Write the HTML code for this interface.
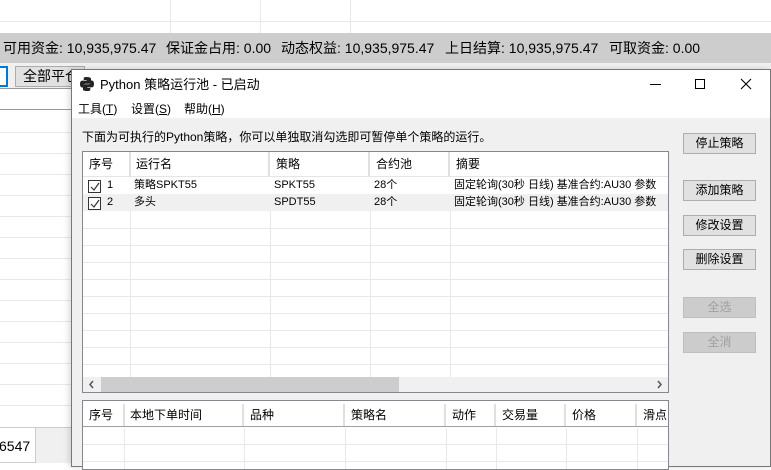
<!DOCTYPE html>
<html><head><meta charset="utf-8"><style>
*{margin:0;padding:0;box-sizing:border-box}
body{width:771px;height:467px;overflow:hidden;background:#fff;position:relative;font-family:"Liberation Sans","Noto Sans CJK SC",sans-serif;font-size:12px;color:#000}
.a{position:absolute}
.hl{position:absolute;height:1px;background:#e8e8e8}
.vl{position:absolute;width:1px;background:#e8e8e8}
.btn{position:absolute;background:#e1e1e1;border:1px solid #adadad;text-align:center;font-size:12px;line-height:18px}
.dis{color:#a0a0a0;background:#cccccc;border-color:#bfbfbf}
.hd{position:absolute;top:0;height:24px;line-height:24px;padding-left:6px;border-right:2px solid #e0e0e0;font-size:12px}
.cell{position:absolute;font-size:11px;line-height:17px}
.cb{position:absolute;width:13px;height:13px;border:1px solid #333;background:#fff}
.st{position:absolute;top:33px;font-size:14px;line-height:30px;white-space:nowrap}
</style></head><body>
<div class="hl" style="left:0;top:21px;width:771px"></div>
<div class="vl" style="left:170px;top:0;height:33px"></div>
<div class="vl" style="left:260px;top:0;height:33px"></div>
<div class="vl" style="left:350px;top:0;height:33px"></div>
<div class="a" style="left:0;top:33px;width:771px;height:30px;background:#cdcdcd"></div>
<div class="st" style="left:3px">可用资金: 10,935,975.47</div>
<div class="st" style="left:166px">保证金占用: 0.00</div>
<div class="st" style="left:281px">动态权益: 10,935,975.47</div>
<div class="st" style="left:445px">上日结算: 10,935,975.47</div>
<div class="st" style="left:609px">可取资金: 0.00</div>
<div class="a" style="left:0;top:63px;width:771px;height:26px;background:#f0f0f0"></div>
<div class="a" style="left:-4px;top:66px;width:12px;height:21px;border:2px solid #0078d7;background:#fff"></div>
<div class="a" style="left:15px;top:66px;width:70px;height:21px;border:1px solid #adadad;background:#e1e1e1;font-size:14px;line-height:19px;padding-left:7px">全部平仓</div>
<div class="a" style="left:0;top:88px;width:71px;height:1px;background:#999"></div>
<div class="a" style="left:0;top:89px;width:71px;height:21px;background:#fff;border-bottom:1px solid #999"></div>
<div class="hl" style="left:0;top:132px;width:71px"></div><div class="hl" style="left:0;top:153px;width:71px"></div>
<div class="hl" style="left:0;top:174px;width:71px"></div><div class="hl" style="left:0;top:195px;width:71px"></div>
<div class="hl" style="left:0;top:216px;width:71px"></div><div class="hl" style="left:0;top:237px;width:71px"></div>
<div class="hl" style="left:0;top:258px;width:71px"></div><div class="hl" style="left:0;top:279px;width:71px"></div>
<div class="hl" style="left:0;top:300px;width:71px"></div><div class="hl" style="left:0;top:321px;width:71px"></div>
<div class="hl" style="left:0;top:342px;width:71px"></div><div class="hl" style="left:0;top:363px;width:71px"></div>
<div class="hl" style="left:0;top:384px;width:71px"></div><div class="hl" style="left:0;top:405px;width:71px"></div>
<div class="a" style="left:0;top:427px;width:71px;height:36px;background:#f0f0f0;border-top:1px solid #ccc"></div>
<div class="a" style="left:-2px;top:427px;width:38px;height:36px;background:#fff;border:1px solid #ccc;font-size:14px;line-height:36px">6547</div>
<div class="a" style="left:71px;top:69px;width:700px;height:398px;background:#f0f0f0;border:1px solid #777;box-shadow:-2px 0 6px rgba(0,0,0,.15)"></div>
<div class="a" style="left:72px;top:70px;width:698px;height:48px;background:#fff"></div>
<svg class="a" style="left:79px;top:76px" width="16" height="16" viewBox="0 0 16 16"><path d="M7.5 1C4.5 1 4.7 2.3 4.7 2.3V4h3v.6H3.5S1 4.3 1 8c0 3.6 2.1 3.5 2.1 3.5h1.3V9.8s-.1-2.1 2.1-2.1h3.5s2 0 2-2V2.8S12.3 1 7.5 1z" fill="#222"/><path d="M8.5 15c3 0 2.8-1.3 2.8-1.3V12h-3v-.6h4.2S15 11.7 15 8c0-3.6-2.1-3.5-2.1-3.5h-1.3v1.7s.1 2.1-2.1 2.1H6s-2 0-2 2v3.3S3.7 15 8.5 15z" fill="#222"/></svg>
<div class="a" style="left:100px;top:76px;font-size:13px;line-height:17px">Python 策略运行池 - 已启动</div>
<div class="a" style="left:650px;top:84px;width:11px;height:1px;background:#000"></div>
<div class="a" style="left:695px;top:79px;width:10px;height:10px;border:1px solid #000"></div>
<svg class="a" style="left:740px;top:78px" width="12" height="12"><path d="M1 1L11 11M11 1L1 11" stroke="#000" stroke-width="1.1"/></svg>
<div class="a" style="left:78px;top:101px;font-size:12px;line-height:16px">工具(<u>T</u>)</div>
<div class="a" style="left:131px;top:101px;font-size:12px;line-height:16px">设置(<u>S</u>)</div>
<div class="a" style="left:184px;top:101px;font-size:12px;line-height:16px">帮助(<u>H</u>)</div>
<div class="a" style="left:82px;top:129px;font-size:12px;line-height:16px">下面为可执行的Python策略，你可以单独取消勾选即可暂停单个策略的运行。</div>
<div class="a" style="left:82px;top:151px;width:587px;height:242px;background:#fff;border:1px solid #828790;overflow:hidden">
 <div class="a" style="left:0;top:0;width:587px;height:25px;border-bottom:1px solid #e5e5e5">
  <div class="hd" style="left:0;width:48px">序号</div>
  <div class="hd" style="left:47px;width:140px">运行名</div>
  <div class="hd" style="left:187px;width:100px">策略</div>
  <div class="hd" style="left:287px;width:80px">合约池</div>
  <div class="hd" style="left:367px;width:220px;border:0">摘要</div>
 </div>
 <div class="a" style="left:0;top:42px;width:587px;height:17px;background:#f0f0f0"></div>
 <div class="vl" style="left:47px;top:59px;height:170px"></div><div class="vl" style="left:187px;top:59px;height:170px"></div>
 <div class="vl" style="left:287px;top:59px;height:170px"></div><div class="vl" style="left:367px;top:59px;height:170px"></div>
 <div class="hl" style="left:0;top:76px;width:587px"></div><div class="hl" style="left:0;top:93px;width:587px"></div>
 <div class="hl" style="left:0;top:110px;width:587px"></div><div class="hl" style="left:0;top:127px;width:587px"></div>
 <div class="hl" style="left:0;top:144px;width:587px"></div><div class="hl" style="left:0;top:161px;width:587px"></div>
 <div class="hl" style="left:0;top:178px;width:587px"></div><div class="hl" style="left:0;top:195px;width:587px"></div>
 <div class="hl" style="left:0;top:212px;width:587px"></div>
 <div class="cb" style="left:5px;top:28px"></div><svg class="a" style="left:6px;top:29px" width="12" height="12"><path d="M2 6l3 3 5-7" stroke="#333" fill="none" stroke-width="1.2"/></svg>
 <div class="cell" style="left:24px;top:25px">1</div>
 <div class="cb" style="left:5px;top:45px"></div><svg class="a" style="left:6px;top:46px" width="12" height="12"><path d="M2 6l3 3 5-7" stroke="#333" fill="none" stroke-width="1.2"/></svg>
 <div class="cell" style="left:24px;top:42px">2</div>
 <div class="cell" style="left:51px;top:25px">策略SPKT55</div><div class="cell" style="left:51px;top:42px">多头</div>
 <div class="cell" style="left:191px;top:25px">SPKT55</div><div class="cell" style="left:191px;top:42px">SPDT55</div>
 <div class="cell" style="left:291px;top:25px">28个</div><div class="cell" style="left:291px;top:42px">28个</div>
 <div class="cell" style="left:371px;top:25px;white-space:nowrap">固定轮询(30秒 日线) 基准合约:AU30 参数</div>
 <div class="cell" style="left:371px;top:42px;white-space:nowrap">固定轮询(30秒 日线) 基准合约:AU30 参数</div>
 <div class="a" style="left:0;top:225px;width:587px;height:15px;background:#f0f0f0"></div>
 <div class="a" style="left:18px;top:225px;width:298px;height:15px;background:#cdcdcd"></div>
 <svg class="a" style="left:5px;top:228px" width="8" height="9"><path d="M5 1L2 4.5 5 8" stroke="#555" stroke-width="1.5" fill="none"/></svg>
 <svg class="a" style="left:572px;top:228px" width="8" height="9"><path d="M3 1L6 4.5 3 8" stroke="#555" stroke-width="1.5" fill="none"/></svg>
</div>
<div class="a" style="left:82px;top:400px;width:587px;height:70px;background:#fff;border:1px solid #828790;overflow:hidden">
 <div class="a" style="left:0;top:3px;width:587px;height:23px;border-bottom:1px solid #a0a0a0">
  <div class="hd" style="left:0;width:42px;height:22px;line-height:22px">序号</div>
  <div class="hd" style="left:41px;width:120px;height:22px;line-height:22px">本地下单时间</div>
  <div class="hd" style="left:161px;width:101px;height:22px;line-height:22px">品种</div>
  <div class="hd" style="left:262px;width:101px;height:22px;line-height:22px">策略名</div>
  <div class="hd" style="left:363px;width:50px;height:22px;line-height:22px">动作</div>
  <div class="hd" style="left:413px;width:70px;height:22px;line-height:22px">交易量</div>
  <div class="hd" style="left:483px;width:71px;height:22px;line-height:22px">价格</div>
  <div class="hd" style="left:554px;width:40px;height:22px;line-height:22px;border:0">滑点</div>
 </div>
 <div class="vl" style="left:41px;top:27px;height:50px"></div><div class="vl" style="left:161px;top:27px;height:50px"></div>
 <div class="vl" style="left:262px;top:27px;height:50px"></div><div class="vl" style="left:363px;top:27px;height:50px"></div>
 <div class="vl" style="left:413px;top:27px;height:50px"></div><div class="vl" style="left:483px;top:27px;height:50px"></div>
 <div class="vl" style="left:554px;top:27px;height:50px"></div>
 <div class="hl" style="left:0;top:43px;width:587px"></div><div class="hl" style="left:0;top:60px;width:587px"></div>
</div>
<div class="btn" style="left:683px;top:133px;width:73px;height:21px">停止策略</div>
<div class="btn" style="left:683px;top:180px;width:73px;height:21px">添加策略</div>
<div class="btn" style="left:683px;top:215px;width:73px;height:21px">修改设置</div>
<div class="btn" style="left:683px;top:249px;width:73px;height:21px">删除设置</div>
<div class="btn dis" style="left:683px;top:297px;width:73px;height:21px">全选</div>
<div class="btn dis" style="left:683px;top:332px;width:73px;height:21px">全消</div>
</body></html>
